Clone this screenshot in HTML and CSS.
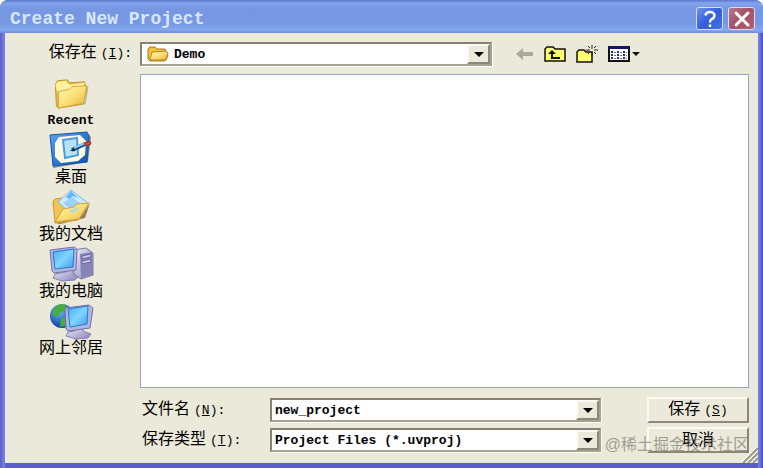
FILE: index.html
```html
<!DOCTYPE html>
<html lang="zh-CN">
<head>
<meta charset="utf-8">
<title>Create New Project</title>
<link rel="stylesheet" href="styles.css">
</head>
<body>
<svg class="defs" aria-hidden="true">
  <defs>
    <linearGradient id="gold" x1="0" y1="0" x2="1" y2="1"><stop offset="0" stop-color="#fff8b8"/><stop offset=".55" stop-color="#fbdc72"/><stop offset="1" stop-color="#e3ac35"/></linearGradient>
    <linearGradient id="screen" x1="0" y1="0" x2="1" y2="1"><stop offset="0" stop-color="#45aef2"/><stop offset=".5" stop-color="#80d4fc"/><stop offset="1" stop-color="#3e9bea"/></linearGradient>
    <linearGradient id="metal" x1="0" y1="0" x2="1" y2="1"><stop offset="0" stop-color="#f1f0fb"/><stop offset="1" stop-color="#8583b8"/></linearGradient>
    <linearGradient id="blue" x1="0" y1="0" x2="1" y2="1"><stop offset="0" stop-color="#59a7ef"/><stop offset="1" stop-color="#0b4eb0"/></linearGradient>
    <radialGradient id="globe" cx=".4" cy=".3" r=".7"><stop offset="0" stop-color="#69b7f5"/><stop offset="1" stop-color="#0a3da6"/></radialGradient>
  </defs>
</svg>
<main class="dialog">
  <header class="titlebar">
    <h1 class="title">Create New Project</h1>
    <button class="caption help" type="button" aria-label="Help"><svg width="18" height="18" viewBox="0 0 18 18"><path d="M4.500 5.500Q5 2 9 2t4.500 3.500Q13.500 8 10 9.500Q9 10 9 12.500M9 14.500v2.500" fill="none" stroke="#fff" stroke-width="2.500"/></svg></button>
    <button class="caption close" type="button" aria-label="Close"><svg width="18" height="18" viewBox="0 0 18 18"><path d="M3 3l12 12M15 3L3 15" stroke="#fff" stroke-width="3" stroke-linecap="round"/></svg></button>
  </header>
  <form class="body">
    <label class="look-label" for="folder">保存在<span class="key">(<u>I</u>):</span></label>
    <div class="toolbar">
      <div class="combo look">
        <svg class="folder-icon" width="22" height="18" viewBox="0 0 22 18"><path d="M1 14V4l2-2h5l2 2h8l1 2v3l2 1-2 5-2 1H3z" fill="#f5c23e" stroke="#a87818"/><path d="M3 14L5 7l14-1 2 2-2 7H5z" fill="url(#gold)" stroke="#b5851d"/></svg>
        <select class="field with-icon" id="folder"><option>Demo</option></select>
        <span class="arrow"></span>
      </div>
      <div class="tools">
        <button class="tool" type="button" aria-label="Back"><svg width="18" height="16" viewBox="0 0 18 16"><path d="M0 8l7-6v4h10v4H7v4z" fill="#aaa89b"/></svg></button>
        <button class="tool" type="button" aria-label="Up one level"><svg width="22" height="18" viewBox="0 0 22 18"><path d="M1 16V4l2-2h6l2 2h10v12z" fill="#ffff72" stroke="#111" stroke-width="1.500"/><path d="M4 9l4-4 4 4H9v3h7v2H7V9z" fill="#111"/></svg></button>
        <button class="tool" type="button" aria-label="New folder"><svg width="22" height="20" viewBox="0 0 22 20"><path d="M1 18V8l2-2h5l2 2h6v10z" fill="#ffff72" stroke="#111" stroke-width="1.500"/><path d="M16 1v4M16 8v4M10 6h4M18 6h4M12 2l2 2M20 2l-2 2M20 10l-2-2M12 10l2-2" stroke="#222"/></svg></button>
        <button class="tool" type="button" aria-label="Views"><svg width="32" height="18" viewBox="0 0 32 18"><path d="M1 2h20v14H1z" fill="#fff" stroke="#111" stroke-width="2"/><path d="M1 1h20v3H1z" fill="#15156d"/><path d="M3 6h2v2H3zm6 0h2v2H9zm6 0h2v2h-2zM3 9h2v2H3zm6 0h2v2H9zm6 0h2v2h-2zM3 12h2v2H3zm6 0h2v2H9zm6 0h2v2h-2z" fill="#2a2aa8"/><path d="M6 7.500h2m4 0h2m4 0h1M6 10.500h2m4 0h2m4 0h1M6 13.500h2m4 0h2m4 0h1" stroke="#777"/><path d="M24 7h8l-4 4z" fill="#111"/></svg></button>
      </div>
    </div>
    <nav class="places">
      <a class="place" href="#recent"><svg width="44" height="38" viewBox="0 0 44 38"><path d="M8 35l29-4 3-18-2-1-2 17z" fill="#8d8050" opacity=".5"/><path d="M6 11l2-4 10-1 3 3 15-1 1 5-3 18-25 4-2-2z" fill="#e7b83f" stroke="#c5952c"/><path d="M6 12l2-4 9-1 3 4 16-2-2 6-26 4z" fill="#fff1a0"/><path d="M9 18l11-2 3-3 15-1-3 18-26 5z" fill="url(#gold)" stroke="#d3a43c"/></svg><span class="key">Recent</span></a>
      <a class="place" href="#desktop"><svg width="44" height="38" viewBox="0 0 44 38"><path d="M2 5l36-3 4 4-3 25-35 6z" fill="#8c8c84"/><path d="M1 4l37-3 2 4-2 26-34 4z" fill="url(#blue)" stroke="#1257ad"/><path d="M10 6l21-2 6 6-1 14-7 6-17 2-6-6V12z" fill="#fffbe2"/><path d="M14 9l14-2 1 17-13 3z" fill="#b9e2ff" stroke="#4b9ee3" stroke-width="2"/><path d="M23 19l13-6" stroke="#164f8e" stroke-width="4"/><path d="M25 17l11-5" stroke="#8dccf4" stroke-width="2"/><path d="M35 12l6-2 1 3-5 2z" fill="#d64531" stroke="#9e3026"/><path d="M21 20l4-3 1 3z" fill="#222"/></svg><span>桌面</span></a>
      <a class="place" href="#documents"><svg width="44" height="38" viewBox="0 0 44 38"><path d="M7 35l23-4 11-16-5 15-25 6z" fill="#90835b"/><path d="M4 14l2-3 7-1 2 3 16 1-2 18-23 3z" fill="#f2c552" stroke="#c99a30"/><path d="M9 14L22 2l17 13-14 13z" fill="#cbe9ff" stroke="#86b8e0"/><path d="M17 9l5-6 7 7-5-2-4 3z" fill="#60b7f6"/><path d="M14 15l9-6 10 8-9 6z" fill="#9bd0f8"/><path d="M6 34l8-13 11-2 3-3 12-1-10 16z" fill="url(#gold)" stroke="#d2a13a"/><path d="M20 22l11-3-7 7z" fill="#aeddd9"/></svg><span>我的文档</span></a>
      <a class="place" href="#computer"><svg width="46" height="38" viewBox="0 0 46 38"><path d="M26 5l12-2 7 5v22l-12 4-7-5z" fill="url(#metal)" stroke="#7775a5"/><path d="M32 9l12-2v22l-11 4z" fill="#8583b7"/><path d="M34 11l9-2v3l-9 2zm0 5l9-2v3l-9 2z" fill="#c5c5e6" stroke="#6967a1"/><path d="M17 23l8-1v7l5 3-3 3-13 1-9-3 2-4 11-2z" fill="url(#metal)" stroke="#8583b8"/><path d="M2 5l24-3 3 2-1 21-22 3-2-2z" fill="#b5b3df" stroke="#7573a8"/><path d="M5 7l21-3-1 18-18 2z" fill="url(#screen)" stroke="#227bd0"/></svg><span>我的电脑</span></a>
      <a class="place" href="#network"><svg width="46" height="38" viewBox="0 0 46 38"><circle cx="14" cy="14" r="12" fill="url(#globe)"/><path d="M6 6q7-6 12-3l-1 6-5 2-2 4-6-2zM13 15l6 2-2 7-5 1z" fill="#47ae42"/><path d="M27 26l8-1v4l8 3-3 4-12 1-10-3 2-4 7-1z" fill="url(#metal)" stroke="#8583b8"/><path d="M17 6l24-3 4 3-3 20-22 3-2-2z" fill="#b5b3df" stroke="#7270a5"/><path d="M20 7l20-3-1 18-17 3z" fill="url(#screen)" stroke="#227bd0"/></svg><span>网上邻居</span></a>
    </nav>
    <section class="files" aria-label="Files"></section>
    <div class="details">
      <div class="row">
        <label class="name-label" for="filename">文件名<span class="key">(<u>N</u>):</span></label>
        <div class="combo wide"><input class="field" id="filename" type="text" value="new_project"><button class="arrow" type="button" aria-label="Recent names"></button></div>
        <button class="action" type="submit">保存<span class="key">(<u>S</u>)</span></button>
      </div>
      <div class="row">
        <label class="name-label" for="filetype">保存类型<span class="key">(<u>T</u>):</span></label>
        <div class="combo wide"><select class="field" id="filetype"><option>Project Files (*.uvproj)</option></select><span class="arrow"></span></div>
        <button class="action" type="button">取消</button>
      </div>
    </div>
    <svg class="grip" width="16" height="16" viewBox="0 0 16 16"><path d="M1 16L16 1M6 16L16 6M11 16l5-5" stroke="#9d9a87" stroke-width="2"/><path d="M0 15L15 0M5 15L15 5M10 15l5-5" stroke="#fff"/></svg>
    <div class="watermark">@稀土掘金技术社区</div>
  </form>
</main>
</body>
</html>
```
FILE: styles.css
```css
* { box-sizing: border-box; }
body {
  margin: 0;
  background: #fff;
  color: #000;
  font: 16px/20px "Liberation Sans", "Noto Sans CJK SC", sans-serif;
}
.defs { position: absolute; width: 0; height: 0; }
.dialog {
  display: flex;
  flex-direction: column;
  min-height: 100vh;
  border-radius: 8px 8px 0 0;
  overflow: hidden;
  background: linear-gradient(90deg, #5d5cc8, #7480e0 4px, #7480e0 calc(100% - 4px), #4a48c4);
}
.titlebar {
  display: flex;
  align-items: center;
  gap: 5px;
  height: 33px;
  padding: 4px 8px 0 10px;
  background: linear-gradient(#5c75cd 0, #82a3ec 3px, #7596e1 9px, #7998e3 24px, #82a8ee 30px, #7189d7 33px);
}
.title {
  flex: 1;
  margin: 0;
  color: #d9e7ff;
  font: bold 18px/20px "Liberation Mono", monospace;
}
.caption {
  display: grid;
  place-items: center;
  width: 27px;
  height: 23px;
  padding: 0;
  border: 1px solid #d5dcf7;
  border-radius: 3px;
}
.help { background: linear-gradient(135deg, #6e91ee, #345edc 50%, #4273e8); }
.close { background: linear-gradient(135deg, #bd7688, #a35067 50%, #b76072); }
.body {
  position: relative;
  flex: 1;
  display: grid;
  grid-template-columns: 135px 1fr;
  grid-template-rows: 41px 1fr auto;
  margin: 0 5px 5px;
  padding-right: 9px;
  background: #ebe9d9;
  box-shadow: 0 5px 0 #5a5ecb;
}
.key { font: bold 13px/20px "Liberation Mono", monospace; }
label .key, .action .key { margin-left: 4px; font-weight: normal; }
.look-label { padding: 9px 8px 0 0; text-align: right; }
.toolbar { display: flex; align-items: flex-start; padding-top: 9px; }
.combo {
  position: relative;
  display: flex;
  height: 24px;
  border: 2px solid;
  border-color: #858273 #a6a392 #a6a392 #858273;
  background: #fff;
  box-shadow: 1px 1px 0 #fff;
}
.look { flex: 0 1 352px; }
.wide { flex: 1; }
.field {
  appearance: none;
  flex: 1;
  min-width: 0;
  padding: 1px 24px 0 3px;
  border: 0;
  outline: 0;
  background: transparent;
  color: #000;
  font: bold 13px/20px "Liberation Mono", monospace;
}
.with-icon { padding-left: 32px; }
.folder-icon { position: absolute; left: 5px; top: 1px; }
.arrow {
  position: absolute;
  top: 0;
  right: 0;
  display: grid;
  place-items: center;
  width: 23px;
  height: 20px;
  padding: 0;
  border: 2px solid;
  border-color: #fbfaf3 #8b8878 #8b8878 #fbfaf3;
  background: #ebe9d9;
}
span.arrow { pointer-events: none; }
.arrow::after {
  content: "";
  border: 5px solid transparent;
  border-top-color: #000;
  border-bottom: 0;
}
.tools { display: flex; align-items: center; gap: 10px; height: 24px; padding-left: 24px; }
.tool { display: flex; padding: 0; border: 0; background: transparent; }
.places { display: flex; flex-direction: column; margin-right: 3px; }
.place {
  display: flex;
  flex-direction: column;
  align-items: center;
  height: 57px;
  color: #000;
  line-height: 16px;
  text-decoration: none;
}
.files { border: 1px solid #92a7c2; background: #fff; }
.details {
  grid-column: 2;
  display: grid;
  gap: 4px;
  padding: 9px 0 10px;
}
.row { display: flex; align-items: center; }
.name-label { width: 130px; padding-left: 2px; }
.action {
  width: 102px;
  height: 26px;
  margin-left: 46px;
  padding: 0;
  border: 2px solid;
  border-color: #fbfaf3 #8b8878 #8b8878 #fbfaf3;
  background: #ebe9d9;
  color: #000;
  font: 16px/20px "Liberation Sans", "Noto Sans CJK SC", sans-serif;
}
.grip { position: absolute; right: 0; bottom: 0; }
.watermark {
  position: absolute;
  right: 9px;
  bottom: 8px;
  color: rgba(105, 104, 96, 0.6);
  pointer-events: none;
}
```
